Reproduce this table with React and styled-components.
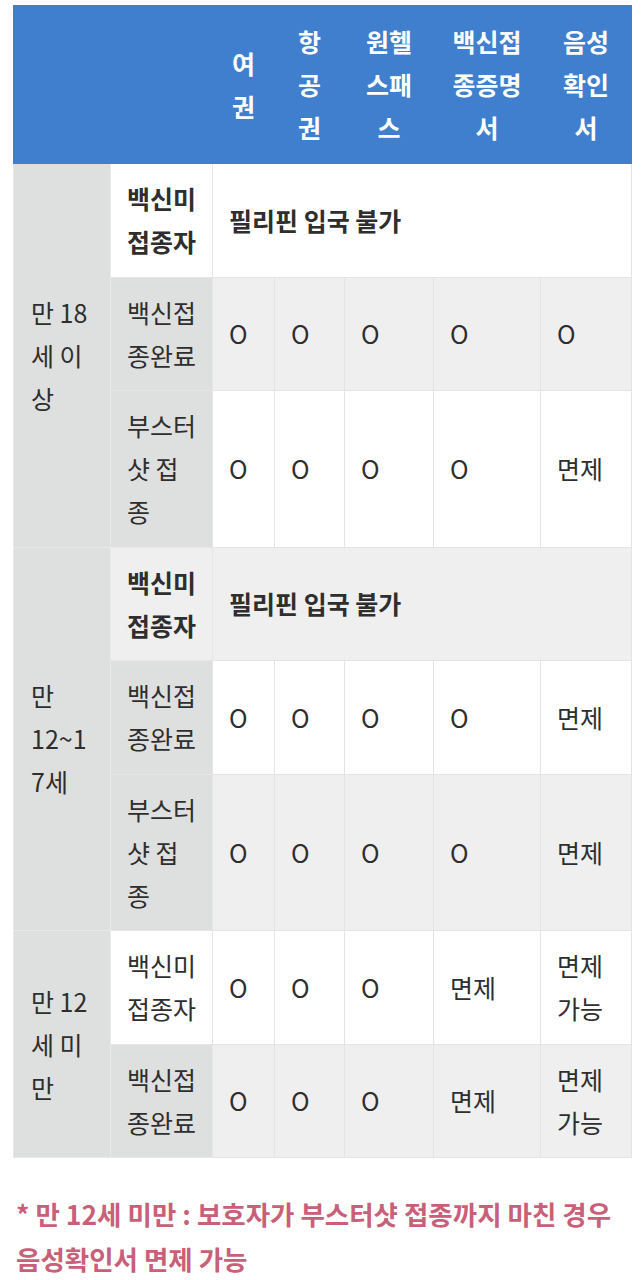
import React from "react";
import styled, { createGlobalStyle } from "styled-components";

const Global = createGlobalStyle`
  html, body { margin: 0; padding: 0; background: #ffffff; }
  body { font-family: "Noto Sans CJK KR", "Noto Sans", sans-serif; color: #2e2e2e; }
`;

const Page = styled.div`
  padding: 5px 13px 0 13px;
`;

const Table = styled.table`
  width: 618px;
  border-collapse: collapse;
  table-layout: fixed;
  font-size: 25px;
  line-height: 43px;
  word-break: normal;
  overflow-wrap: anywhere;
`;

const HeadCell = styled.th`
  background: #3f7fcd;
  color: #ffffff;
  font-weight: 700;
  text-align: center;
  vertical-align: middle;
  padding: 14px 16px 14px;
  border: 1px solid #3f7fcd;
`;

const Row = styled.tr`
  background: ${(p) => (p.$alt ? "#efefef" : "#ffffff")};
`;

const AgeCell = styled.th`
  background: #dedfdf;
  font-weight: 400;
  text-align: left;
  vertical-align: middle;
  padding: 13.25px 15px 13.25px 17px;
  border: 1px solid #e9e9e9;
`;

const LabelCell = styled.th`
  background: ${(p) => (p.$plain ? "transparent" : "#dedfdf")};
  font-weight: ${(p) => (p.$bold ? 700 : 400)};
  text-align: left;
  vertical-align: middle;
  padding: 13.25px 15px 13.25px 16px;
  border: 1px solid #e6e6e6;
`;

const Cell = styled.td`
  font-weight: ${(p) => (p.$bold ? 700 : 400)};
  text-align: left;
  vertical-align: middle;
  padding: 13.25px 15px 13.25px 16px;
  border: 1px solid #e4e4e4;
`;

const Note = styled.p`
  margin: 33px 0 0 0;
  padding: 0 14px 0 3px;
  color: #c95f78;
  font-size: 26.5px;
  line-height: 45px;
  font-weight: 700;
`;

const widths = [97, 102, 62, 70, 89, 107, 91];
const headers = ["여권", "항공권", "원헬스패스", "백신접종증명서", "음성확인서"];

const groups = [
  {
    age: "만 18세 이상",
    rows: [
      { label: "백신미접종자", bold: true, plain: true, span: "필리핀 입국 불가" },
      { label: "백신접종완료", cells: ["O", "O", "O", "O", "O"] },
      { label: "부스터샷 접종", cells: ["O", "O", "O", "O", "면제"] },
    ],
  },
  {
    age: "만 12~17세",
    rows: [
      { label: "백신미접종자", bold: true, plain: true, span: "필리핀 입국 불가" },
      { label: "백신접종완료", cells: ["O", "O", "O", "O", "면제"] },
      { label: "부스터샷 접종", cells: ["O", "O", "O", "O", "면제"] },
    ],
  },
  {
    age: "만 12세 미만",
    rows: [
      { label: "백신미접종자", plain: true, cells: ["O", "O", "O", "면제", "면제 가능"] },
      { label: "백신접종완료", cells: ["O", "O", "O", "면제", "면제 가능"] },
    ],
  },
];

export default function App() {
  let index = 0;
  return (
    <Page>
      <Global />
      <Table>
        <colgroup>
          {widths.map((w, i) => (
            <col key={i} style={{ width: w }} />
          ))}
        </colgroup>
        <thead>
          <tr>
            <HeadCell colSpan={2} />
            {headers.map((h) => (
              <HeadCell key={h}>{h}</HeadCell>
            ))}
          </tr>
        </thead>
        <tbody>
          {groups.map((g) =>
            g.rows.map((r, ri) => {
              const alt = index % 2 === 1;
              index += 1;
              return (
                <Row key={g.age + ri} $alt={alt}>
                  {ri === 0 && <AgeCell rowSpan={g.rows.length}>{g.age}</AgeCell>}
                  <LabelCell $bold={r.bold} $plain={r.plain}>
                    {r.label}
                  </LabelCell>
                  {r.span ? (
                    <Cell colSpan={5} $bold>
                      {r.span}
                    </Cell>
                  ) : (
                    r.cells.map((c, ci) => <Cell key={ci}>{c}</Cell>)
                  )}
                </Row>
              );
            })
          )}
        </tbody>
      </Table>
      <Note>* 만 12세 미만 : 보호자가 부스터샷 접종까지 마친 경우 음성확인서 면제 가능</Note>
    </Page>
  );
}
